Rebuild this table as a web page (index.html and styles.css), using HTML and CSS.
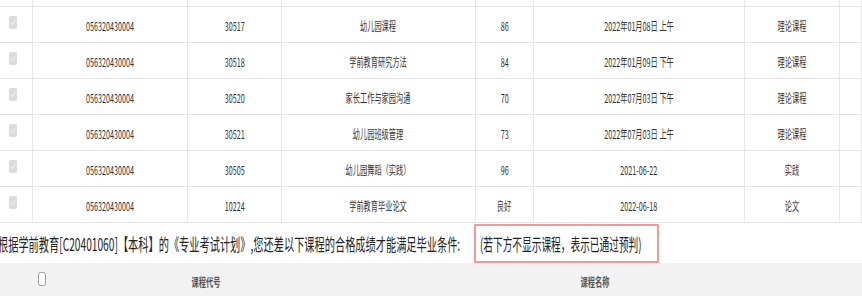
FILE: index.html
```html
<!DOCTYPE html>
<html lang="zh-CN">
<head>
<meta charset="utf-8">
<title>成绩</title>
<link rel="stylesheet" href="styles.css">
</head>
<body>
<div class="page">
  <div class="table">
    <div class="row row-partial">
      <div class="cell"></div><div class="cell"></div><div class="cell"></div><div class="cell"></div><div class="cell"></div><div class="cell"></div><div class="cell"></div><div class="cell"></div>
    </div>
    <div class="row">
      <div class="cell cell-check"><svg class="cb" width="8" height="13" viewBox="0 0 8 13"><rect x="0" y="0" width="8" height="13" rx="2" fill="#dcdcdc"/><polyline points="2,7 3.5,9 6,4" fill="none" stroke="#f2f2f2" stroke-width="1"/></svg></div>
      <div class="cell"><span class="sx">056320430004</span></div>
      <div class="cell"><span class="sx">30517</span></div>
      <div class="cell"><span class="sx">幼儿园课程</span></div>
      <div class="cell"><span class="sx">86</span></div>
      <div class="cell"><span class="sx">2022年01月08日 上午</span></div>
      <div class="cell"><span class="sx">理论课程</span></div>
      <div class="cell"></div>
    </div>
    <div class="row">
      <div class="cell cell-check"><svg class="cb" width="8" height="13" viewBox="0 0 8 13"><rect x="0" y="0" width="8" height="13" rx="2" fill="#dcdcdc"/><polyline points="2,7 3.5,9 6,4" fill="none" stroke="#f2f2f2" stroke-width="1"/></svg></div>
      <div class="cell"><span class="sx">056320430004</span></div>
      <div class="cell"><span class="sx">30518</span></div>
      <div class="cell"><span class="sx">学前教育研究方法</span></div>
      <div class="cell"><span class="sx">84</span></div>
      <div class="cell"><span class="sx">2022年01月09日 下午</span></div>
      <div class="cell"><span class="sx">理论课程</span></div>
      <div class="cell"></div>
    </div>
    <div class="row">
      <div class="cell cell-check"><svg class="cb" width="8" height="13" viewBox="0 0 8 13"><rect x="0" y="0" width="8" height="13" rx="2" fill="#dcdcdc"/><polyline points="2,7 3.5,9 6,4" fill="none" stroke="#f2f2f2" stroke-width="1"/></svg></div>
      <div class="cell"><span class="sx">056320430004</span></div>
      <div class="cell"><span class="sx">30520</span></div>
      <div class="cell"><span class="sx">家长工作与家园沟通</span></div>
      <div class="cell"><span class="sx">70</span></div>
      <div class="cell"><span class="sx">2022年07月03日 下午</span></div>
      <div class="cell"><span class="sx">理论课程</span></div>
      <div class="cell"></div>
    </div>
    <div class="row">
      <div class="cell cell-check"><svg class="cb" width="8" height="13" viewBox="0 0 8 13"><rect x="0" y="0" width="8" height="13" rx="2" fill="#dcdcdc"/><polyline points="2,7 3.5,9 6,4" fill="none" stroke="#f2f2f2" stroke-width="1"/></svg></div>
      <div class="cell"><span class="sx">056320430004</span></div>
      <div class="cell"><span class="sx">30521</span></div>
      <div class="cell"><span class="sx">幼儿园班级管理</span></div>
      <div class="cell"><span class="sx">73</span></div>
      <div class="cell"><span class="sx">2022年07月03日 上午</span></div>
      <div class="cell"><span class="sx">理论课程</span></div>
      <div class="cell"></div>
    </div>
    <div class="row">
      <div class="cell cell-check"><svg class="cb" width="8" height="13" viewBox="0 0 8 13"><rect x="0" y="0" width="8" height="13" rx="2" fill="#dcdcdc"/><polyline points="2,7 3.5,9 6,4" fill="none" stroke="#f2f2f2" stroke-width="1"/></svg></div>
      <div class="cell"><span class="sx">056320430004</span></div>
      <div class="cell"><span class="sx">30505</span></div>
      <div class="cell"><span class="sx">幼儿园舞蹈（实践）</span></div>
      <div class="cell"><span class="sx">96</span></div>
      <div class="cell"><span class="sx">2021-06-22</span></div>
      <div class="cell"><span class="sx">实践</span></div>
      <div class="cell"></div>
    </div>
    <div class="row">
      <div class="cell cell-check"><svg class="cb" width="8" height="13" viewBox="0 0 8 13"><rect x="0" y="0" width="8" height="13" rx="2" fill="#dcdcdc"/><polyline points="2,7 3.5,9 6,4" fill="none" stroke="#f2f2f2" stroke-width="1"/></svg></div>
      <div class="cell"><span class="sx">056320430004</span></div>
      <div class="cell"><span class="sx">10224</span></div>
      <div class="cell"><span class="sx">学前教育毕业论文</span></div>
      <div class="cell"><span class="sx">良好</span></div>
      <div class="cell"><span class="sx">2022-06-18</span></div>
      <div class="cell"><span class="sx">论文</span></div>
      <div class="cell"></div>
    </div>
  </div>

  <div class="notice">
    <div class="notice-text"><span class="sx-left sx-main">根据学前教育[C20401060]【本科】的《专业考试计划》,您还差以下课程的合格成绩才能满足毕业条件:</span></div>
    <div class="notice-box"><span class="sx-left sx-box">(若下方不显示课程，表示已通过预判)</span></div>
  </div>

  <div class="head">
    <div class="head-cell head-check"><svg width="8" height="14" viewBox="0 0 8 14"><rect x="0.5" y="0.5" width="7" height="13" rx="2" fill="#fff" stroke="#9a9a9a" stroke-width="1"/></svg></div>
    <div class="head-cell"><span class="sx">课程代号</span></div>
    <div class="head-cell"><span class="sx">课程名称</span></div>
  </div>
</div>
</body>
</html>
```

FILE: styles.css
```css
html, body {
  margin: 0;
  padding: 0;
  background: #ffffff;
}
body {
  width: 862px;
  height: 296px;
  overflow: hidden;
  font-family: "Noto Sans CJK SC", "Noto Sans", sans-serif;
  color: #333333;
}
.page {
  width: 862px;
}
.table {
  display: flex;
  flex-direction: column;
}
.row {
  display: grid;
  grid-template-columns: 33px 155px 94px 194px 58px 211px 95px 1fr;
  height: 36px;
  box-sizing: border-box;
  border-bottom: 1px solid #e5e5e5;
}
.row-partial {
  height: 7px;
}
.cell {
  box-sizing: border-box;
  border-right: 1px solid #e8e8e8;
  display: flex;
  align-items: center;
  justify-content: center;
  font-size: 12px;
  line-height: 14px;
  padding-top: 3px;
  overflow: visible;
  white-space: nowrap;
}
.cell-check {
  align-items: flex-start;
  justify-content: flex-start;
  padding-top: 9px;
  padding-left: 9px;
}
.cb {
  display: block;
}
.sx {
  display: inline-block;
  transform: scaleX(0.6);
  transform-origin: center center;
  white-space: nowrap;
}
.sx-left {
  display: inline-block;
  transform-origin: left center;
  white-space: nowrap;
}
.sx-main {
  transform: scaleX(0.6);
  margin-right: -320px;
}
.sx-box {
  transform: scaleX(0.57);
  margin-right: -140px;
}
.notice {
  display: grid;
  grid-template-columns: 474px 185px;
  height: 40px;
}
.notice-text {
  display: flex;
  align-items: center;
  margin-left: -2px;
  font-size: 17px;
  color: #222;
  padding-top: 1px;
  overflow: visible;
}
.notice-box {
  margin-top: 1px;
  box-sizing: border-box;
  border: 2px solid #f09a9a;
  border-radius: 1px;
  display: flex;
  align-items: center;
  padding-left: 4px;
  font-size: 17px;
  color: #222;
  overflow: visible;
}
.head {
  display: grid;
  grid-template-columns: 83px 246px 533px;
  height: 36px;
  background: #f2f2f2;
}
.head-cell {
  display: flex;
  align-items: center;
  justify-content: center;
  font-size: 12px;
  font-weight: bold;
  color: #555;
  padding-top: 1px;
}
.head-check {
  align-items: flex-start;
  padding-top: 9px;
}
.head-check svg {
  display: block;
}
```
